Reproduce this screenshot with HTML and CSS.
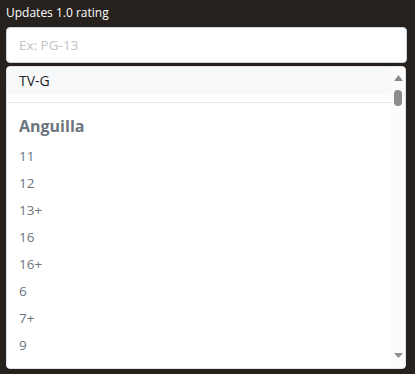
FILE: index.html
```html
<!DOCTYPE html>
<html lang="en">
<head>
    <meta charset="UTF-8">
    <meta name="viewport" content="width=device-width, initial-scale=1.0">
    <title>Rating</title>
    <link rel="stylesheet" href="styles.css">
</head>
<body>
    <div class="field">
        <label for="rating">Updates 1.0 rating</label>
        <input type="text" id="rating" placeholder="Ex: PG-13">

        <div class="menu">
            <div class="menu-list">
                <div class="item active">TV-G</div>
                <div class="divider"></div>
                <div class="header">Anguilla</div>
                <div class="item">11</div>
                <div class="item">12</div>
                <div class="item">13+</div>
                <div class="item">16</div>
                <div class="item">16+</div>
                <div class="item">6</div>
                <div class="item">7+</div>
                <div class="item">9</div>
            </div>
            <div class="scrollbar">
                <svg class="arrow" width="9" height="6" viewBox="0 0 9 6"><path d="M4.5 0 L9 6 L0 6 Z" fill="#8c8c8c"/></svg>
                <div class="thumb"></div>
                <div class="track"></div>
                <svg class="arrow" width="9" height="5" viewBox="0 0 9 5"><path d="M0 0 L9 0 L4.5 5 Z" fill="#8c8c8c"/></svg>
            </div>
        </div>
    </div>
</body>
</html>
```

FILE: styles.css
```css
body {
    font-family: "Segoe UI", "Open Sans", Arial, sans-serif;
    background-color: #26211d;
    margin: 0;
    padding: 4px 8px 0 6px;
}
.field {
    display: flex;
    flex-direction: column;
}
label {
    color: #fff;
    font-size: 12px;
    line-height: 18px;
    margin-bottom: 5px;
}
input {
    box-sizing: border-box;
    height: 36px;
    padding: 0 12px;
    border: 1px solid #ced4da;
    border-radius: 4px;
    font-family: inherit;
    font-size: 13.5px;
    color: #212529;
    background: #fff;
}
input::placeholder {
    color: #c2c2c2;
}
.menu {
    margin-top: 3px;
    height: 301px;
    background: #fff;
    border: 1px solid #dee2e6;
    border-radius: 4px;
    display: flex;
    overflow: hidden;
    margin-right: 1px;
}
.menu-list {
    flex: 1;
    overflow: hidden;
}
.item {
    padding: 0 12px;
    height: 27px;
    line-height: 27px;
    font-size: 13.5px;
    color: #6c757d;
}
.item.active {
    background: #f8f9fa;
    color: #212529;
    height: 28px;
    line-height: 28px;
    font-size: 14px;
}
.divider {
    height: 1px;
    background: #e5e7e9;
    margin: 7px 0 6px;
}
.header {
    padding: 0 12px;
    font-size: 16px;
    font-weight: bold;
    color: #6c757d;
    height: 34px;
    line-height: 34px;
}
.scrollbar {
    width: 14px;
    background: #fbfbfb;
    display: flex;
    flex-direction: column;
    align-items: center;
    padding: 8px 0 10px;
    box-sizing: border-box;
}
.thumb {
    width: 8px;
    height: 16px;
    border-radius: 4px;
    background: #8c8c8c;
    margin-top: 9px;
}
.track {
    flex: 1;
}
```
